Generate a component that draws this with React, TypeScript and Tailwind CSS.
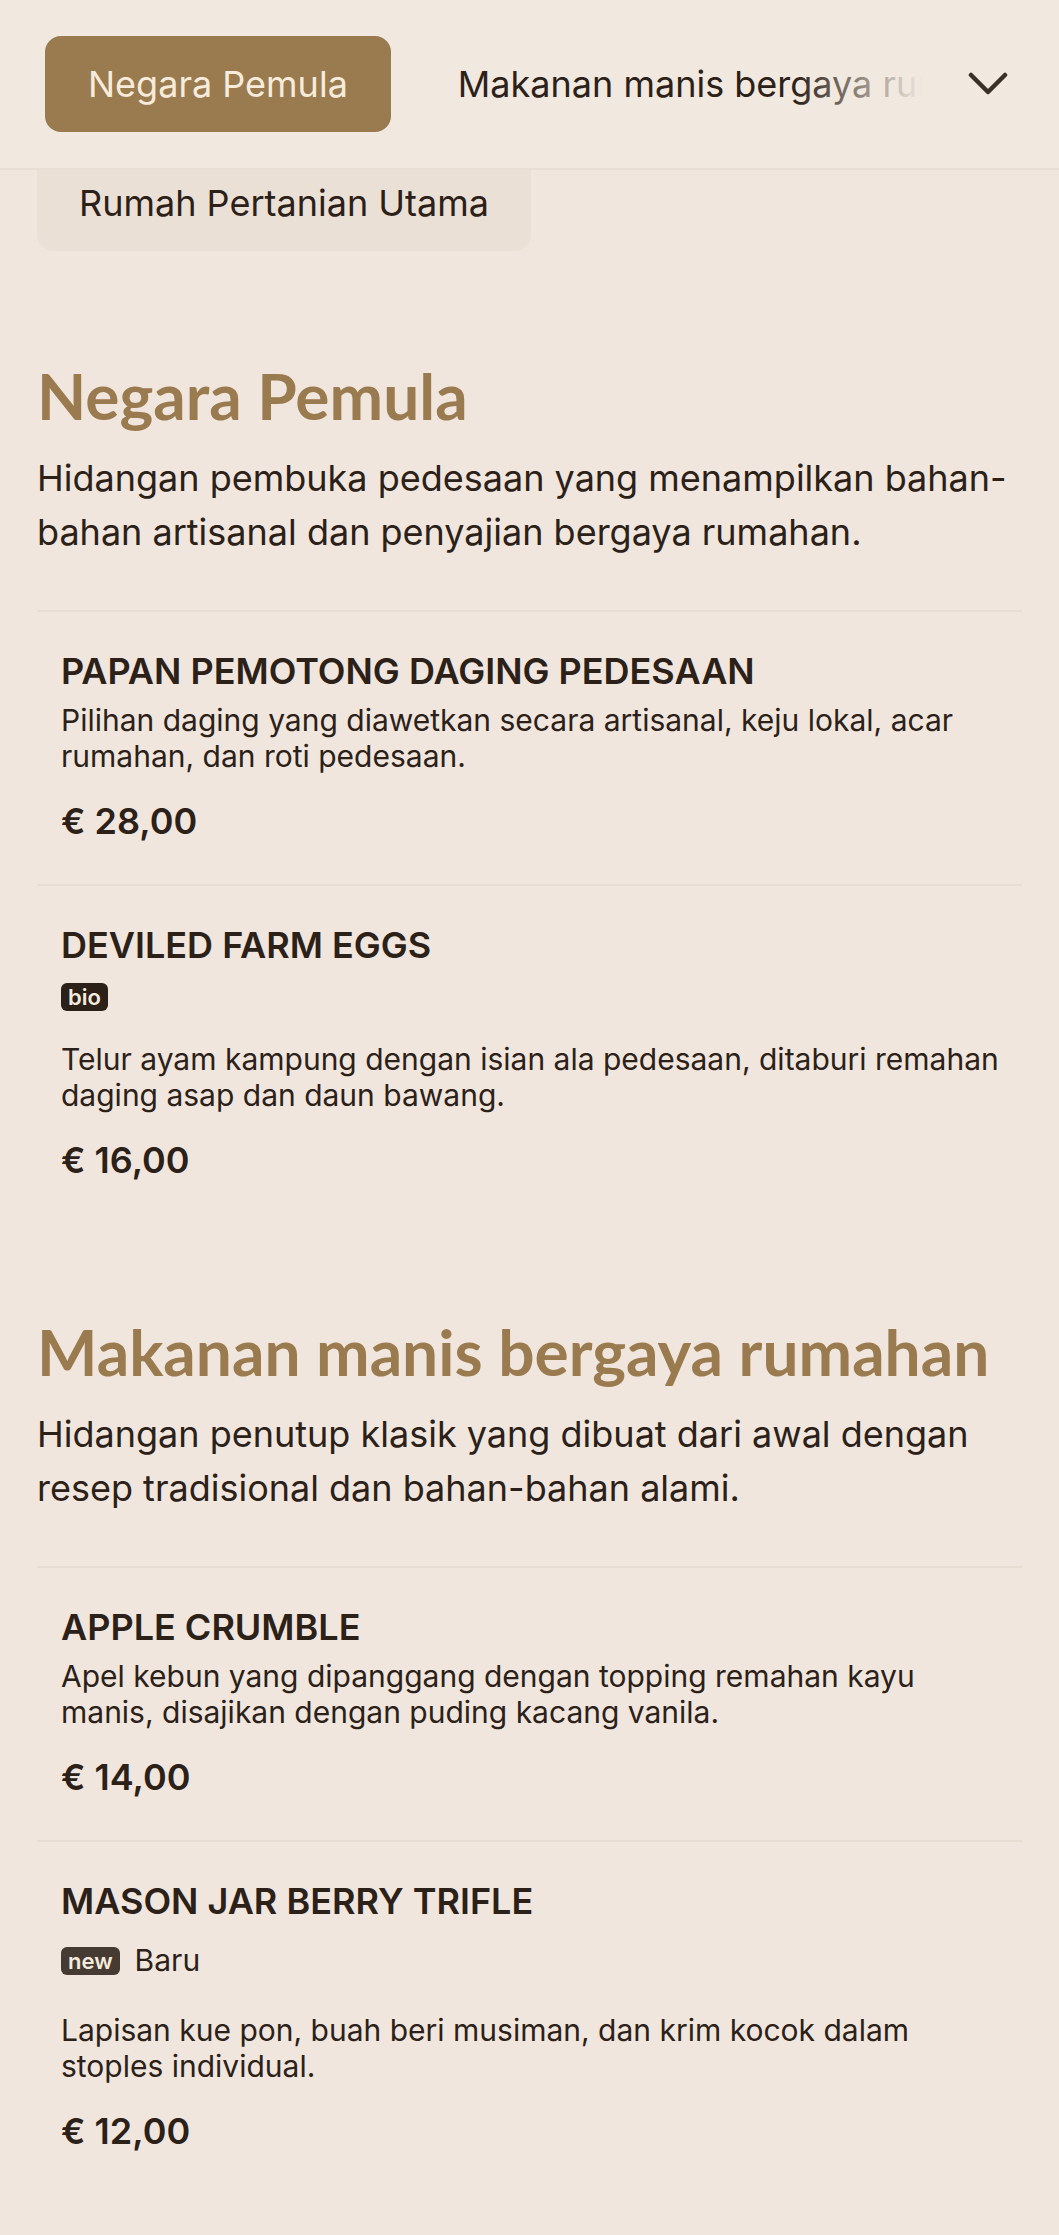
import React from "react";

type Badge = { label: string; text?: string; tone: "dark" | "soft" };

type MenuItem = {
  name: string;
  description: string;
  price: string;
  badge?: Badge;
};

type Section = {
  title: string;
  description: string;
  items: MenuItem[];
};

const sections: Section[] = [
  {
    title: "Negara Pemula",
    description:
      "Hidangan pembuka pedesaan yang menampilkan bahan-bahan artisanal dan penyajian bergaya rumahan.",
    items: [
      {
        name: "PAPAN PEMOTONG DAGING PEDESAAN",
        description:
          "Pilihan daging yang diawetkan secara artisanal, keju lokal, acar\nrumahan, dan roti pedesaan.",
        price: "€ 28,00",
      },
      {
        name: "DEVILED FARM EGGS",
        badge: { label: "bio", tone: "dark" },
        description:
          "Telur ayam kampung dengan isian ala pedesaan, ditaburi remahan\ndaging asap dan daun bawang.",
        price: "€ 16,00",
      },
    ],
  },
  {
    title: "Makanan manis bergaya rumahan",
    description:
      "Hidangan penutup klasik yang dibuat dari awal dengan resep tradisional dan bahan-bahan alami.",
    items: [
      {
        name: "APPLE CRUMBLE",
        description:
          "Apel kebun yang dipanggang dengan topping remahan kayu\nmanis, disajikan dengan puding kacang vanila.",
        price: "€ 14,00",
      },
      {
        name: "MASON JAR BERRY TRIFLE",
        badge: { label: "new", text: "Baru", tone: "soft" },
        description:
          "Lapisan kue pon, buah beri musiman, dan krim kocok dalam\nstoples individual.",
        price: "€ 12,00",
      },
    ],
  },
];

const ChevronDown = () => (
  <svg width="40" height="24" viewBox="0 0 40 24" fill="none">
    <polyline
      points="3,3 20,20 37,3"
      stroke="#3a3028"
      strokeWidth="4.5"
      strokeLinecap="round"
      strokeLinejoin="round"
    />
  </svg>
);

const Item = ({ item }: { item: MenuItem }) => (
  <li className="border-t-2 border-[#e8ddd2] pt-[37px] pb-[41px] pl-[24px]">
    <h3 className="text-[36px] leading-[44px] font-semibold">{item.name}</h3>

    {item.badge && (
      <div className="mt-[16px] mb-[30px] flex items-center gap-[15px]">
        <span
          className={
            item.badge.tone === "dark"
              ? "h-[28px] rounded-[6px] bg-[#2b2119] px-[7px] text-[22px] leading-[28px] font-semibold text-[#f4eadd]"
              : "h-[28px] rounded-[6px] bg-[#463b32] px-[7px] text-[22px] leading-[28px] font-semibold text-[#f4eadd]"
          }
        >
          {item.badge.label}
        </span>
        {item.badge.text && (
          <span className="text-[30px] leading-[43px]">{item.badge.text}</span>
        )}
      </div>
    )}

    <p
      className={
        item.badge
          ? "text-[30px] leading-[36px] whitespace-pre-line"
          : "mt-[9px] text-[30px] leading-[36px] whitespace-pre-line"
      }
    >
      {item.description}
    </p>

    <p className="mt-[25px] text-[36px] leading-[44px] font-semibold">
      {item.price}
    </p>
  </li>
);

export default function App() {
  return (
    <div className="min-h-screen bg-[#f0e6dd] font-['Inter',sans-serif] text-[#2b2119]">
      {/* Barre des catégories */}
      <header className="flex items-center border-b-2 border-[#e9ded3] bg-[#f1e8df] py-[36px] pr-[51px] pl-[45px]">
        <nav className="relative flex min-w-0 flex-1 items-center gap-[24px] overflow-hidden">
          <button className="h-[96px] shrink-0 rounded-[16px] bg-[#9a7a4f] px-[43px] text-[36px] text-[#f7ecdc]">
            Negara Pemula
          </button>
          <button className="shrink-0 px-[43px] text-[36px] whitespace-nowrap text-[#2b2119]">
            Makanan manis bergaya rumahan
          </button>
          <div className="pointer-events-none absolute inset-y-0 right-0 w-[150px] bg-linear-to-l from-[#f1e8df] from-15% to-transparent" />
        </nav>
        <button className="ml-[23px] flex h-[40px] w-[40px] items-center justify-center">
          <ChevronDown />
        </button>
      </header>

      <main className="px-[37px] pb-[40px]">
        <div className="inline-block rounded-b-[16px] bg-[#ebe0d6] px-[42px] pt-[11px] pb-[26px] text-[36px] leading-[44px]">
          Rumah Pertanian Utama
        </div>

        {sections.map((section, i) => (
          <section
            key={section.title}
            className={i === 0 ? "pt-[106px]" : "pt-[90px]"}
          >
            <h2 className="font-['Lato',sans-serif] text-[64px] leading-[77px] font-bold text-[#9a7a4f]">
              {section.title}
            </h2>
            <p className="mt-[17px] text-[36px] leading-[54px]">
              {section.description}
            </p>
            <ul className="mt-[51px]">
              {section.items.map((item) => (
                <Item key={item.name} item={item} />
              ))}
            </ul>
          </section>
        ))}
      </main>
    </div>
  );
}
